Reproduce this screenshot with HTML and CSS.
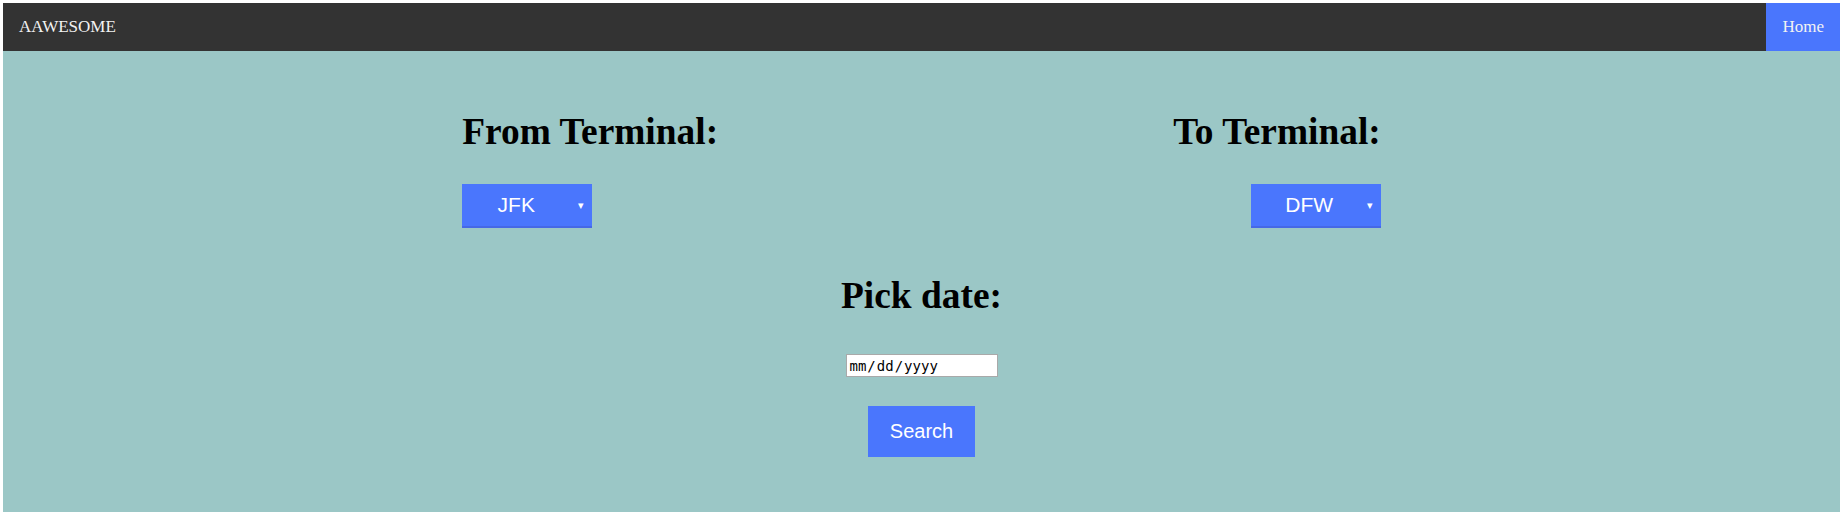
FILE: index.html
```html
<!DOCTYPE html>
<html lang="en">
<head>
<meta charset="utf-8">
<title>AAWESOME</title>
<link rel="stylesheet" href="styles.css">
</head>
<body>
<div class="topnav">
  <a class="brand" href="#">AAWESOME</a>
  <a class="nav-link active" href="#">Home</a>
</div>
<main class="main">
  <div class="terminals">
    <div class="terminal terminal-from">
      <h1 class="heading">From Terminal:</h1>
      <div class="dropdown">
        <span class="dropdown-value">JFK</span>
        <span class="dropdown-arrow">&#9662;</span>
      </div>
    </div>
    <div class="terminal terminal-to">
      <h1 class="heading">To Terminal:</h1>
      <div class="dropdown">
        <span class="dropdown-value">DFW</span>
        <span class="dropdown-arrow">&#9662;</span>
      </div>
    </div>
  </div>
  <div class="date-section">
    <h1 class="heading heading-date">Pick date:</h1>
    <input class="date-input" type="date">
    <button class="search-btn" type="button">Search</button>
  </div>
</main>
</body>
</html>
```
FILE: styles.css
```css
html, body {
  background: #ffffff;
}
body {
  margin: 3px;
  font-family: "Liberation Serif", "Times New Roman", serif;
}
.topnav {
  display: flex;
  justify-content: space-between;
  background: #333333;
}
.topnav a {
  color: #f2f2f2;
  text-decoration: none;
  font-size: 17px;
  line-height: 20px;
  padding: 14px 16px;
}
.topnav .active {
  background: #4a76fd;
}
.main {
  background: #9bc7c6;
  padding: 59px 0 55px;
}
.terminals {
  width: 50%;
  margin: 0 auto;
  display: flex;
  justify-content: space-between;
}
.terminal {
  display: flex;
  flex-direction: column;
}
.terminal-from {
  align-items: flex-start;
}
.terminal-to {
  align-items: flex-end;
}
.heading {
  margin: 0 0 31px;
  font-size: 37.4px;
  line-height: 43px;
  font-weight: bold;
  color: #000;
}
.dropdown {
  box-sizing: border-box;
  width: 130px;
  height: 44px;
  background: #4a76fd;
  border-bottom: 2px solid #4668e6;
  display: flex;
  align-items: center;
  color: #fff;
  font-family: "Liberation Sans", Arial, sans-serif;
}
.dropdown-value {
  flex: 1;
  text-align: center;
  font-size: 21px;
}
.terminal-to .dropdown-value {
  padding-left: 9px;
}
.dropdown-arrow {
  width: 22px;
  text-align: center;
  font-size: 11px;
}
.date-section {
  margin-top: 46px;
  display: flex;
  flex-direction: column;
  align-items: center;
}
.heading-date {
  margin-bottom: 37px;
}
.date-input {
  box-sizing: border-box;
  width: 152px;
  height: 23px;
  margin: 0;
  padding: 1px 2px;
  border: 1px solid #a9a9a9;
  background: #fff;
  font-family: "DejaVu Sans Mono", monospace;
  font-size: 14px;
  color: #000;
}
.date-input::-webkit-calendar-picker-indicator {
  display: none;
}
.search-btn {
  margin-top: 29px;
  padding: 0 22px;
  height: 51px;
  border: none;
  background: #4a76fd;
  color: #fff;
  font-family: "Liberation Sans", Arial, sans-serif;
  font-size: 20px;
}
```
